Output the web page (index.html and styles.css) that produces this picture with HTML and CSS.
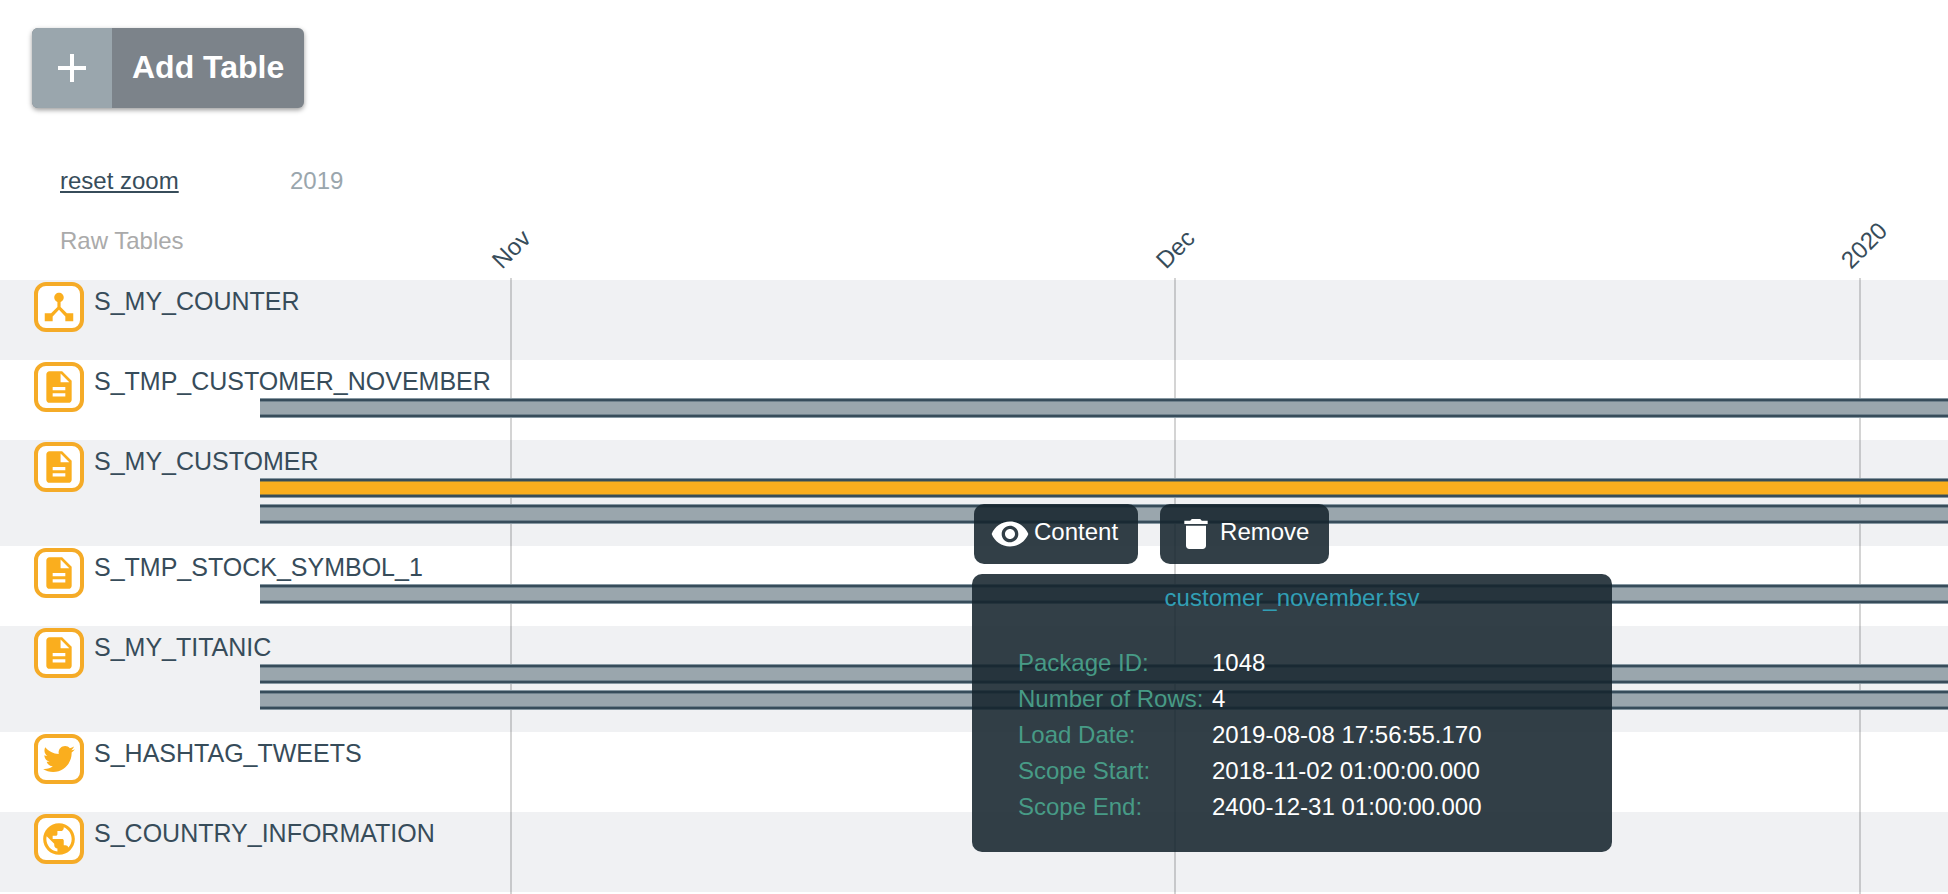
FILE: index.html
```html
<!DOCTYPE html>
<html lang="en">
<head>
    <meta charset="UTF-8">
    <meta name="viewport" content="width=device-width, initial-scale=1.0">
    <title>Raw Tables</title>
    <link rel="stylesheet" href="styles.css">
</head>
<body>

    <!-- Shared icons -->
    <svg class="icon-defs" aria-hidden="true">
        <symbol id="icon-hub" viewBox="0 0 24 24">
            <path d="M17 16l-4-4V8.82C14.16 8.4 15 7.3 15 6c0-1.66-1.34-3-3-3S9 4.34 9 6c0 1.3.84 2.4 2 2.82V12l-4 4H3v5h5v-3.05l4-4.2 4 4.2V21h5v-5h-4z"/>
        </symbol>
        <symbol id="icon-file" viewBox="0 0 24 24">
            <path d="M14 2H6c-1.1 0-1.99.9-1.99 2L4 20c0 1.1.89 2 1.99 2H18c1.1 0 2-.9 2-2V8l-6-6zm2 16H8v-2h8v2zm0-4H8v-2h8v2zm-3-5V3.5L18.5 9H13z"/>
        </symbol>
        <symbol id="icon-twitter" viewBox="-50 -50 612 612">
            <path d="M459.37 151.716c.325 4.548.325 9.097.325 13.645 0 138.72-105.583 298.558-298.558 298.558-59.452 0-114.68-17.219-161.137-47.106 8.447.974 16.568 1.299 25.34 1.299 49.055 0 94.213-16.568 130.274-44.832-46.132-.975-84.792-31.188-98.112-72.772 6.498.974 12.995 1.624 19.818 1.624 9.421 0 18.843-1.3 27.614-3.573-48.081-9.747-84.143-51.98-84.143-102.985v-1.299c13.969 7.797 30.214 12.67 47.431 13.319-28.264-18.843-46.781-51.005-46.781-87.391 0-19.492 5.197-37.36 14.294-52.954 51.655 63.675 129.3 105.258 216.365 109.807-1.624-7.797-2.599-15.918-2.599-24.04 0-57.828 46.782-104.934 104.934-104.934 30.213 0 57.502 12.67 76.67 33.137 23.715-4.548 46.456-13.32 66.599-25.34-7.798 24.366-24.366 44.833-46.132 57.827 21.117-2.273 41.584-8.122 60.426-16.243-14.292 20.791-32.161 39.308-52.628 54.253z"/>
        </symbol>
        <symbol id="icon-globe" viewBox="0 0 24 24">
            <path d="M12 2C6.48 2 2 6.48 2 12s4.48 10 10 10 10-4.48 10-10S17.52 2 12 2zm-1 17.93c-3.95-.49-7-3.85-7-7.93 0-.62.08-1.21.21-1.79L9 15v1c0 1.1.9 2 2 2v1.93zm6.9-2.54c-.26-.81-1-1.39-1.9-1.39h-1v-3c0-.55-.45-1-1-1H8v-2h2c.55 0 1-.45 1-1V7h2c1.1 0 2-.9 2-2v-.41c2.93 1.19 5 4.06 5 7.41 0 2.08-.8 3.97-2.1 5.39z"/>
        </symbol>
        <symbol id="icon-eye" viewBox="0 0 24 24">
            <path d="M12 4.5C7 4.5 2.73 7.61 1 12c1.73 4.39 6 7.5 11 7.5s9.27-3.11 11-7.5c-1.73-4.39-6-7.5-11-7.5zM12 17c-2.76 0-5-2.24-5-5s2.24-5 5-5 5 2.24 5 5-2.24 5-5 5zm0-8c-1.66 0-3 1.34-3 3s1.34 3 3 3 3-1.34 3-3-1.34-3-3-3z"/>
        </symbol>
        <symbol id="icon-trash" viewBox="0 0 24 24">
            <path d="M6 19c0 1.1.9 2 2 2h8c1.1 0 2-.9 2-2V7H6v12zM19 4h-3.5l-1-1h-5l-1 1H5v2h14V4z"/>
        </symbol>
    </svg>

    <div class="toolbar">
        <button type="button" class="add-btn">
            <span class="add-icon">
                <svg viewBox="0 0 28 28" aria-hidden="true"><path d="M12 0h4v12h12v4H16v12h-4V16H0v-4h12z"/></svg>
            </span>
            <span class="add-label">Add Table</span>
        </button>
    </div>

    <main class="timeline">
        <!-- Timeline header -->
        <div class="timeline-header">
            <a href="#" class="reset-zoom">reset zoom</a>
            <span class="year">2019</span>
            <span class="group-title">Raw Tables</span>
        </div>

        <div class="rows">
            <!-- Month ticks, columns follow the length of each month -->
            <div class="ticks">
                <div class="tick"><span>Nov</span></div>
                <div class="tick"><span>Dec</span></div>
                <div class="tick"><span>2020</span></div>
            </div>

            <div class="row">
                <span class="row-icon"><svg><use href="#icon-hub"/></svg></span>
                <span class="row-name">S_MY_COUNTER</span>
            </div>

            <div class="row">
                <span class="row-icon"><svg><use href="#icon-file"/></svg></span>
                <span class="row-name">S_TMP_CUSTOMER_NOVEMBER</span>
                <div class="bars">
                    <div class="bar"></div>
                </div>
            </div>

            <div class="row">
                <span class="row-icon"><svg><use href="#icon-file"/></svg></span>
                <span class="row-name">S_MY_CUSTOMER</span>
                <div class="bars">
                    <div class="bar active"></div>
                    <div class="bar"></div>
                </div>
            </div>

            <div class="row">
                <span class="row-icon"><svg><use href="#icon-file"/></svg></span>
                <span class="row-name">S_TMP_STOCK_SYMBOL_1</span>
                <div class="bars">
                    <div class="bar"></div>
                </div>
            </div>

            <div class="row">
                <span class="row-icon"><svg><use href="#icon-file"/></svg></span>
                <span class="row-name">S_MY_TITANIC</span>
                <div class="bars">
                    <div class="bar"></div>
                    <div class="bar"></div>
                </div>
            </div>

            <div class="row">
                <span class="row-icon"><svg><use href="#icon-twitter"/></svg></span>
                <span class="row-name">S_HASHTAG_TWEETS</span>
            </div>

            <div class="row">
                <span class="row-icon"><svg><use href="#icon-globe"/></svg></span>
                <span class="row-name">S_COUNTRY_INFORMATION</span>
            </div>

            <!-- Package popup -->
            <div class="popup">
                <div class="popup-actions">
                    <button type="button" class="popup-btn"><svg><use href="#icon-eye"/></svg>Content</button>
                    <button type="button" class="popup-btn"><svg><use href="#icon-trash"/></svg>Remove</button>
                </div>
                <div class="popup-info">
                    <h2>customer_november.tsv</h2>
                    <dl>
                        <dt>Package ID:</dt>
                        <dd>1048</dd>
                        <dt>Number of Rows:</dt>
                        <dd>4</dd>
                        <dt>Load Date:</dt>
                        <dd>2019-08-08 17:56:55.170</dd>
                        <dt>Scope Start:</dt>
                        <dd>2018-11-02 01:00:00.000</dd>
                        <dt>Scope End:</dt>
                        <dd>2400-12-31 01:00:00.000</dd>
                    </dl>
                </div>
            </div>
        </div>
    </main>

</body>
</html>
```
FILE: styles.css
```css
/* General Reset */
* {
    box-sizing: border-box;
    margin: 0;
    padding: 0;
}

body {
    font-family: "Helvetica Neue Light", "Liberation Sans", Arial, sans-serif;
    font-size: 24px;
    font-weight: 300;
    line-height: 30px;
    color: #374c5a;
    background-color: #fff;
}

button {
    font: inherit;
    color: #fff;
    border: none;
    cursor: pointer;
}

.icon-defs {
    display: none;
}

/* Toolbar */
.toolbar {
    padding: 28px 32px 0;
}

.add-btn {
    display: flex;
    height: 80px;
    border-radius: 6px;
    overflow: hidden;
    background-color: #7c838a;
    box-shadow: 0 2px 5px rgba(0, 0, 0, 0.4);
}

.add-icon {
    display: flex;
    align-items: center;
    justify-content: center;
    width: 80px;
    height: 80px;
    background-color: #9aa6ad;
}

.add-icon svg {
    width: 28px;
    height: 28px;
    fill: #fff;
}

.add-label {
    padding: 0 20px;
    font-size: 32px;
    font-weight: bold;
    line-height: 78px;
}

/* Timeline Header */
.timeline-header {
    display: grid;
    grid-template-columns: 260px 1fr;
    row-gap: 30px;
    padding: 58px 0 24px;
}

.reset-zoom {
    justify-self: start;
    margin-left: 60px;
    color: #374c5a;
    text-underline-offset: 2px;
}

.year {
    padding-left: 30px;
    color: #9aa6ad;
}

.group-title {
    padding-left: 60px;
    color: #aaa;
}

/* Rows */
.rows {
    position: relative;
    padding-bottom: 2px;
}

.row {
    display: grid;
    grid-template-columns: 94px 166px 1fr;
    grid-template-rows: 38px auto;
    min-height: 80px;
}

.row:nth-child(even) {
    background-color: #f0f1f3;
}

.row-icon {
    grid-row: 1 / 3;
    display: flex;
    align-items: center;
    justify-content: center;
    width: 50px;
    height: 50px;
    margin: 2px 0 0 34px;
    border: 4px solid #f5ab27;
    border-radius: 12px;
    background-color: #fff;
}

.row-icon svg {
    flex-shrink: 0;
    width: 38px;
    height: 38px;
    fill: #faae1e;
}

.row-name {
    grid-column: 2 / 4;
    padding-top: 6px;
    font-size: 25px;
    white-space: nowrap;
}

.bars {
    grid-column: 3;
    position: relative;
    z-index: 2;
    display: flex;
    flex-direction: column;
    gap: 8px;
    padding: 1px 0 23px;
}

.bar {
    height: 18px;
    border: solid #374c5a;
    border-width: 2px 0;
    background-color: #9aa6ad;
    box-shadow: 0 1px #8798a2, 0 -1px #8798a2, inset 0 1px #6f818c, inset 0 -1px #6f818c;
}

.bar.active {
    background-color: #faae1e;
    box-shadow: 0 1px #8798a2, 0 -1px #8798a2, inset 0 1px #98823f, inset 0 -1px #98823f;
}

/* Month Ticks */
.ticks {
    position: absolute;
    top: -2px;
    right: 0;
    bottom: 0;
    left: 510px;
    z-index: 1;
    display: grid;
    grid-template-columns: 664fr 685fr 89fr;
}

.tick {
    position: relative;
    border-left: 2px solid rgba(0, 0, 0, 0.17);
}

.tick span {
    position: absolute;
    bottom: 100%;
    left: -10px;
    margin-bottom: 1px;
    transform: rotate(-45deg);
    transform-origin: 0 23px;
}

/* Package Popup */
.popup {
    position: absolute;
    top: 224px;
    left: 50%;
    z-index: 3;
    width: 640px;
    margin-left: -2px;
    color: #fff;
}

.popup-actions {
    display: flex;
    gap: 22px;
    padding: 0 2px;
    margin-bottom: 10px;
}

.popup-btn {
    display: flex;
    align-items: center;
    gap: 4px;
    height: 60px;
    padding: 0 20px 4px 16px;
    border-radius: 10px;
    background-color: rgba(22, 36, 46, 0.88);
}

.popup-btn svg {
    width: 40px;
    height: 40px;
    margin-top: 4px;
    fill: #fff;
}

.popup-info {
    padding: 9px 46px 27px;
    border-radius: 10px;
    background-color: rgba(22, 36, 46, 0.88);
}

.popup-info h2 {
    margin-bottom: 32px;
    font-size: 24px;
    font-weight: 300;
    text-align: center;
    color: #319fb5;
}

.popup-info dl {
    display: grid;
    grid-template-columns: 194px 1fr;
    line-height: 36px;
}

.popup-info dt {
    color: #479b86;
}
```
